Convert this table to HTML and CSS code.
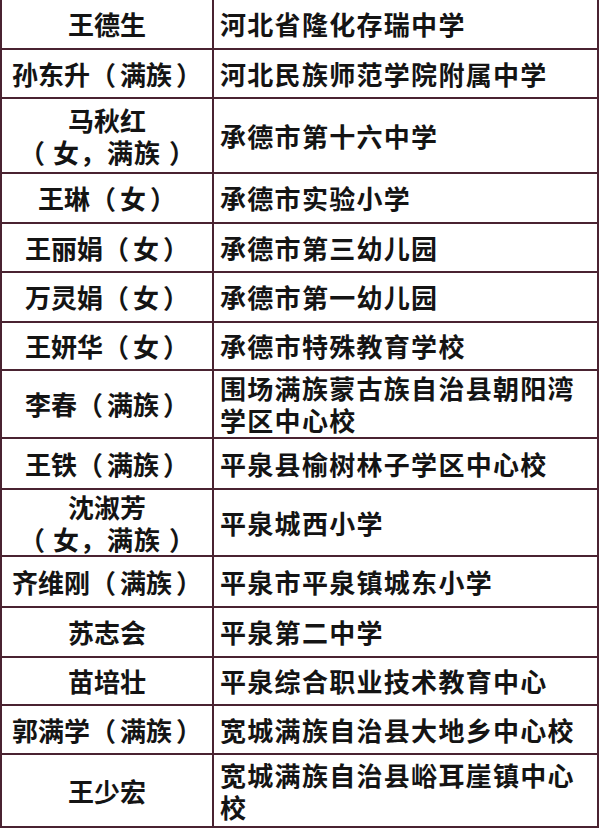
FILE: index.html
```html
<!DOCTYPE html>
<html lang="zh">
<head>
<meta charset="utf-8">
<title>名单</title>
<link rel="stylesheet" href="styles.css">
</head>
<body>
<div class="table">
  <div class="cell name"><div class="t">王德生</div></div><div class="cell school"><div class="t">河北省隆化存瑞中学</div></div>
  <div class="cell name"><div class="t">孙东升（<span class="in">满族</span>）</div></div><div class="cell school"><div class="t">河北民族师范学院附属中学</div></div>
  <div class="cell name"><div class="t">马秋红<br>（<span class="in wide">女，满族</span>）</div></div><div class="cell school"><div class="t">承德市第十六中学</div></div>
  <div class="cell name"><div class="t">王琳（<span class="in">女</span>）</div></div><div class="cell school"><div class="t">承德市实验小学</div></div>
  <div class="cell name"><div class="t">王丽娟（<span class="in">女</span>）</div></div><div class="cell school"><div class="t">承德市第三幼儿园</div></div>
  <div class="cell name"><div class="t">万灵娟（<span class="in">女</span>）</div></div><div class="cell school"><div class="t">承德市第一幼儿园</div></div>
  <div class="cell name"><div class="t">王妍华（<span class="in">女</span>）</div></div><div class="cell school"><div class="t">承德市特殊教育学校</div></div>
  <div class="cell name"><div class="t">李春（<span class="in">满族</span>）</div></div><div class="cell school"><div class="t">围场满族蒙古族自治县朝阳湾<br>学区中心校</div></div>
  <div class="cell name"><div class="t">王铁（<span class="in">满族</span>）</div></div><div class="cell school"><div class="t">平泉县榆树林子学区中心校</div></div>
  <div class="cell name"><div class="t">沈淑芳<br>（<span class="in wide">女，满族</span>）</div></div><div class="cell school"><div class="t">平泉城西小学</div></div>
  <div class="cell name"><div class="t">齐维刚（<span class="in">满族</span>）</div></div><div class="cell school"><div class="t">平泉市平泉镇城东小学</div></div>
  <div class="cell name"><div class="t">苏志会</div></div><div class="cell school"><div class="t">平泉第二中学</div></div>
  <div class="cell name"><div class="t">苗培壮</div></div><div class="cell school"><div class="t">平泉综合职业技术教育中心</div></div>
  <div class="cell name"><div class="t">郭满学（<span class="in">满族</span>）</div></div><div class="cell school"><div class="t">宽城满族自治县大地乡中心校</div></div>
  <div class="cell name"><div class="t">王少宏</div></div><div class="cell school"><div class="t">宽城满族自治县峪耳崖镇中心<br>校</div></div>
</div>
</body>
</html>
```

FILE: styles.css
```css
html, body {
  margin: 0;
  padding: 0;
  background: #ffffff;
}

.table {
  width: 599px;
  box-sizing: border-box;
  display: grid;
  grid-template-columns: 212px 1fr;
  grid-template-rows: 50px 49px 75px 50px 49px 50px 48px 68px 51px 67px 51px 50px 48px 49px 73px;
  border-left: 2px solid #4a2331;
  border-right: 2px solid #4a2331;
  font-family: "Noto Sans CJK SC", "Noto Sans", sans-serif;
  font-weight: 700;
  color: #141414;
}

.cell {
  box-sizing: border-box;
  border-bottom: 2px solid #4a2331;
  display: flex;
  align-items: center;
  line-height: 32px;
}

.name {
  border-right: 2px solid #4a2331;
  justify-content: center;
  text-align: center;
  font-size: 26px;
}

.t {
  white-space: nowrap;
}

.in {
  margin: 0 4px;
}

.in.wide {
  margin: 0 8px;
  letter-spacing: 1px;
}

.school {
  padding-left: 6px;
  font-size: 26px;
  letter-spacing: 1.3px;
}
```
